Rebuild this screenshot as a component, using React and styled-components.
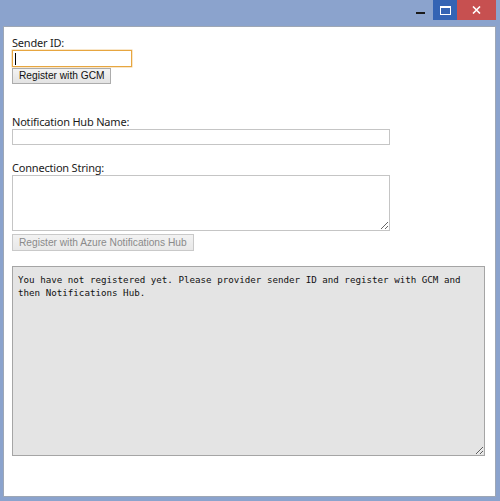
import React from "react";
import styled, { createGlobalStyle } from "styled-components";

const GlobalStyle = createGlobalStyle`
  html, body {
    margin: 0;
    padding: 0;
    background: #8ba3cd;
  }
  * {
    box-sizing: border-box;
  }
`;

const Frame = styled.div`
  width: 500px;
  height: 501px;
  display: flex;
  flex-direction: column;
  background: #8ba3cd;
  overflow: hidden;
`;

const TitleBar = styled.div`
  height: 26px;
  flex: none;
  display: flex;
  justify-content: flex-end;
  align-items: flex-start;
  padding-right: 4px;
`;

const Control = styled.div`
  height: 20px;
  width: ${(p) => p.$w}px;
  background: ${(p) => p.$bg || "transparent"};
  display: flex;
  align-items: center;
  justify-content: center;
`;

const Dash = styled.div`
  width: 9px;
  height: 2px;
  background: #1a1a1a;
  margin-top: 5px;
`;

const MaxBox = styled.div`
  width: 11px;
  height: 9px;
  border: 1px solid #fff;
  border-top-width: 2px;
`;

const Client = styled.div`
  flex: 1;
  margin: 0 4px 4px 3px;
  background: #fff;
  border: 1px solid #9ea7b5;
  padding: 8px 8px;
  display: flex;
  flex-direction: column;
  align-items: flex-start;
`;

const Label = styled.label`
  font-family: "Segoe UI", "Noto Sans", sans-serif;
  font-size: 11px;
  letter-spacing: -0.2px;
  line-height: 15px;
  color: #1b1b1b;
  margin-top: ${(p) => p.$top || 0}px;
`;

const TextInput = styled.input`
  width: ${(p) => p.$w}px;
  height: ${(p) => p.$h || 16}px;
  border: 1px solid #c5c5c5;
  outline: none;
  padding: 0 2px;
  margin: 0;
  font-family: "Segoe UI", "Noto Sans", sans-serif;
  font-size: 12px;
  background: #fff;
`;

const Caret = styled.span`
  display: block;
  width: 1px;
  height: 12px;
  background: #000;
  margin: 2px 0 0 2px;
`;

const FocusBox = styled.div`
  width: 120px;
  height: 17px;
  border: 1px solid #e7a640;
  box-shadow: 0 0 0 0.5px #f3cf94;
`;

const Button = styled.button`
  height: ${(p) => p.$h || 16}px;
  margin-top: ${(p) => p.$top || 0}px;
  padding: 0 6px;
  border: 1px solid ${(p) => (p.disabled ? "#c9c9c9" : "#acacac")};
  border-radius: 0;
  background: ${(p) =>
    p.disabled
      ? "linear-gradient(#f2f2f2, #e8e8e8)"
      : "linear-gradient(#f3f3f3, #e3e3e3)"};
  color: ${(p) => (p.disabled ? "#8a8a8a" : "#111")};
  font-family: "Liberation Sans", Arial, sans-serif;
  font-size: 10.2px;
  line-height: 14px;
  white-space: nowrap;
`;

const Area = styled.textarea`
  width: ${(p) => p.$w}px;
  height: ${(p) => p.$h}px;
  margin: 0;
  padding: 6px 5px;
  border: 1px solid ${(p) => (p.$grey ? "#a5a5a5" : "#c5c5c5")};
  background: ${(p) => (p.$grey ? "#e4e4e4" : "#fff")};
  font-family: "DejaVu Sans Mono", "Liberation Mono", monospace;
  font-size: 9.2px;
  line-height: 13px;
  color: #111;
  resize: both;
  outline: none;
  margin-top: ${(p) => p.$top || 0}px;
`;

export default function App() {
  return (
    <>
      <GlobalStyle />
      <Frame>
        <TitleBar>
          <Control $w={26}>
            <Dash />
          </Control>
          <Control $w={24} $bg="#3464b4">
            <MaxBox />
          </Control>
          <Control $w={39} $bg="#c75050">
            <svg width="9" height="8" viewBox="0 0 9 8">
              <path d="M1 0.5 L8 7.5 M8 0.5 L1 7.5" stroke="#fff" strokeWidth="1.6" />
            </svg>
          </Control>
        </TitleBar>
        <Client>
          <Label>Sender ID:</Label>
          <FocusBox>
            <Caret />
          </FocusBox>
          <Button $top={1} $h={16}>Register with GCM</Button>

          <Label $top={30}>Notification Hub Name:</Label>
          <TextInput $w={378} $h={16} />

          <Label $top={15}>Connection String:</Label>
          <Area $w={378} $h={56} />
          <Button disabled $top={3} $h={17}>
            Register with Azure Notifications Hub
          </Button>

          <Area
            $grey
            $w={473}
            $h={190}
            $top={15}
            readOnly
            value="You have not registered yet. Please provider sender ID and register with GCM and then Notifications Hub."
          />
        </Client>
      </Frame>
    </>
  );
}
